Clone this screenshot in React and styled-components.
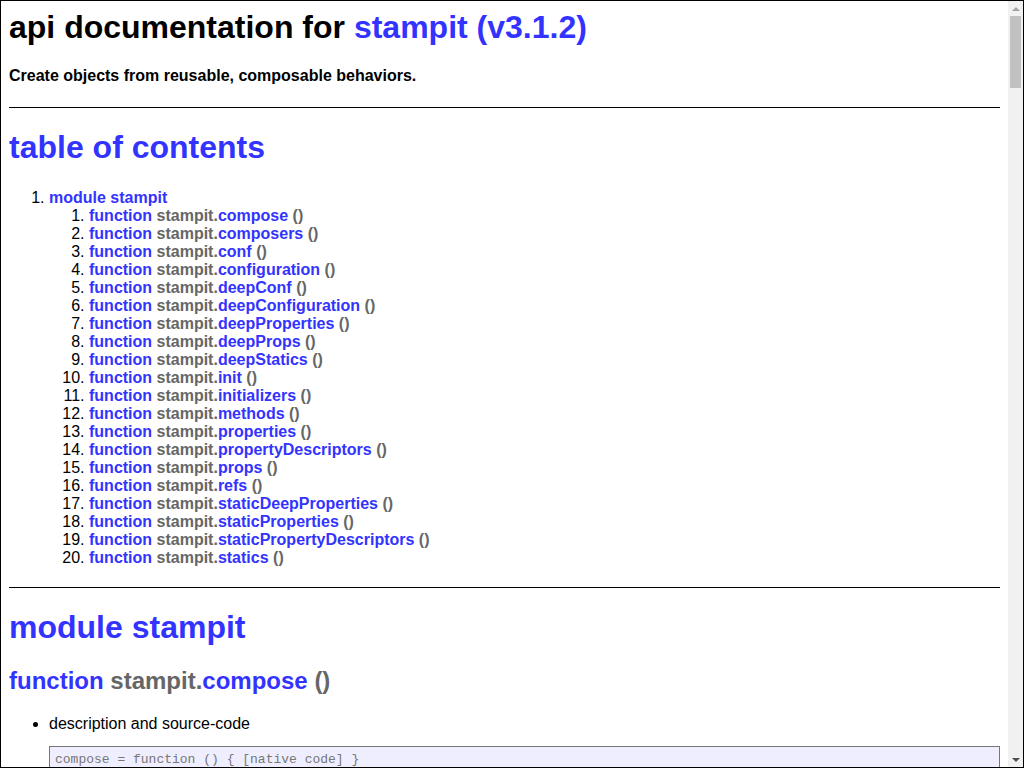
import React from "react";
import styled, { createGlobalStyle } from "styled-components";

const GlobalStyle = createGlobalStyle`
  html, body {
    margin: 0;
    padding: 0;
    overflow: hidden;
    background: #fff;
  }
`;

const Frame = styled.div`
  box-sizing: border-box;
  height: 100vh;
  border: 1px solid #000;
  display: flex;
  background: #fff;
  font-family: "Liberation Sans", Arial, Helvetica, sans-serif;
  color: #000;
`;

const Viewport = styled.div`
  flex: 1;
  min-width: 0;
  overflow-y: auto;
  scrollbar-width: none;
  &::-webkit-scrollbar {
    display: none;
  }
`;

const ScrollRail = styled.div`
  width: 15px;
  flex: none;
  display: flex;
  flex-direction: column;
  background: #f1f1f1;
`;

const ArrowButton = styled.div`
  height: 15px;
  flex: none;
  display: flex;
  align-items: center;
  justify-content: center;
`;

const Triangle = styled.div`
  width: 0;
  height: 0;
  border-left: 4px solid transparent;
  border-right: 4px solid transparent;
  ${(p) =>
    p.$up
      ? `border-bottom: 4px solid ${p.$color};`
      : `border-top: 4px solid ${p.$color};`}
`;

const Track = styled.div`
  flex: 1;
  padding: 0 2px;
`;

const Thumb = styled.div`
  height: 72px;
  background: #c1c1c1;
`;

const Doc = styled.div`
  padding: 8px;
`;

const Title = styled.h1`
  font-size: 32px;
  font-weight: bold;
  margin: 0 0 21.44px;
`;

const Link = styled.a`
  color: #33f;
  font-weight: bold;
  text-decoration: none;
  &:hover {
    text-decoration: underline;
  }
`;

const Tagline = styled.h4`
  font-size: 16px;
  font-weight: bold;
  margin: 21.28px 0;
`;

const Section = styled.div`
  border-top: 1px solid #000;
  margin-top: 20px;
`;

const SectionHeading = styled.h1`
  font-size: 32px;
  font-weight: bold;
  margin: 21.44px 0;
  color: #33f;
`;

const TocList = styled.ol`
  margin: 22.44px 0 16px;
  padding-left: 40px;
`;

const ModuleItem = styled.li`
  margin-top: 10px;
`;

const SubList = styled.ol`
  margin: 0;
  padding-left: 40px;
`;

const Sig = styled.span`
  color: #666;
  font-weight: bold;
`;

const FunctionHeading = styled.h2`
  font-size: 24px;
  font-weight: bold;
  margin: 20.92px 0 19.92px;
`;

const DetailList = styled.ul`
  margin: 16px 0;
  padding-left: 40px;
`;

const CodePre = styled.pre`
  background: #eef;
  border: 1px solid;
  color: #777;
  padding: 5px;
  margin: 13px 0;
  font-family: "Liberation Mono", "DejaVu Sans Mono", monospace;
  font-size: 13px;
  white-space: pre-wrap;
  overflow-wrap: break-word;
`;

const Footer = styled.div`
  margin-top: 20px;
  text-align: center;
`;

const names = [
  "compose",
  "composers",
  "conf",
  "configuration",
  "deepConf",
  "deepConfiguration",
  "deepProperties",
  "deepProps",
  "deepStatics",
  "init",
  "initializers",
  "methods",
  "properties",
  "propertyDescriptors",
  "props",
  "refs",
  "staticDeepProperties",
  "staticProperties",
  "staticPropertyDescriptors",
  "statics",
];

function sourceFor(name) {
  if (name === "compose") {
    return "compose = function () { [native code] }";
  }
  return `function ${name}() {
  var args = [], len = arguments.length;
  while ( len-- ) args[ len ] = arguments[ len ];

  return (this.compose || compose).call(this, {
    ${name}: assign.apply(void 0, [ {} ].concat( args ))
  });
}`;
}

function exampleFor(name) {
  return `...
const stamp = stampit().${name}({ foo: 'bar' });
...`;
}

function EntryLabel({ name }) {
  return (
    <>
      function <Sig>stampit.</Sig>
      {name} <Sig>()</Sig>
    </>
  );
}

export default function App() {
  return (
    <>
      <GlobalStyle />
      <Frame>
        <Viewport>
          <Doc>
            <Title>
              api documentation for{" "}
              <Link href="#stampit">stampit (v3.1.2)</Link>
            </Title>
            <Tagline>Create objects from reusable, composable behaviors.</Tagline>

            <Section>
              <Link href="#apidoc.tableOfContents" id="apidoc.tableOfContents">
                <SectionHeading>table of contents</SectionHeading>
              </Link>
              <TocList>
                <ModuleItem>
                  <Link href="#apidoc.module.stampit">module stampit</Link>
                  <SubList>
                    {names.map((n) => (
                      <li key={n}>
                        <Link href={`#apidoc.element.stampit.${n}`}>
                          <EntryLabel name={n} />
                        </Link>
                      </li>
                    ))}
                  </SubList>
                </ModuleItem>
              </TocList>
            </Section>

            <Section>
              <SectionHeading>
                <Link href="#apidoc.module.stampit" id="apidoc.module.stampit">
                  module stampit
                </Link>
              </SectionHeading>
              {names.map((n) => (
                <div key={n}>
                  <FunctionHeading>
                    <Link
                      href={`#apidoc.element.stampit.${n}`}
                      id={`apidoc.element.stampit.${n}`}
                    >
                      <EntryLabel name={n} />
                    </Link>
                  </FunctionHeading>
                  <DetailList>
                    <li>
                      description and source-code
                      <CodePre>{sourceFor(n)}</CodePre>
                    </li>
                    <li>
                      example usage
                      <CodePre>{exampleFor(n)}</CodePre>
                    </li>
                  </DetailList>
                </div>
              ))}
            </Section>

            <Footer>
              [ this document was created with{" "}
              <Link href="#utility2">utility2</Link> ]
            </Footer>
          </Doc>
        </Viewport>
        <ScrollRail aria-hidden="true">
          <ArrowButton>
            <Triangle $up $color="#a3a3a3" />
          </ArrowButton>
          <Track>
            <Thumb />
          </Track>
          <ArrowButton>
            <Triangle $color="#505050" />
          </ArrowButton>
        </ScrollRail>
      </Frame>
    </>
  );
}
